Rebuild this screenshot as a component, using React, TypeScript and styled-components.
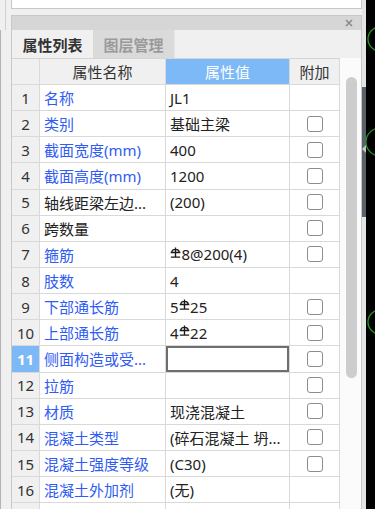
import React from "react";
import styled, { createGlobalStyle } from "styled-components";

const GlobalStyle = createGlobalStyle`
  html, body {
    margin: 0;
    padding: 0;
    background: #f0f0f0;
    overflow: hidden;
  }
  body {
    font-family: "Noto Sans", "Noto Sans CJK SC", sans-serif;
    font-size: 15px;
    color: #222;
  }
`;

const Screen = styled.div`
  display: flex;
  width: 375px;
  height: 509px;
  overflow: hidden;
`;

const Gutter = styled.div`
  width: 11px;
  display: flex;
  flex-direction: column;

  .top {
    height: 30px;
    width: 5px;
    border-right: 1px solid #d0d0d0;
  }
  .bottom {
    flex: 1;
    border-left: 1px solid #b4b4b4;
  }
`;

const Main = styled.div`
  width: 351px;
  display: flex;
  flex-direction: column;
`;

const TopBox = styled.div`
  height: 9px;
  box-sizing: border-box;
  background: #fff;
  border: 1px solid #c6c6c6;
  border-top: none;
  margin-bottom: 6px;
`;

const Panel = styled.div`
  flex: 1;
  display: flex;
  flex-direction: column;
  border-left: 1px solid #c8c8c8;
  border-right: 1px solid #c8c8c8;
  background: #f0f0f0;
  min-height: 0;
`;

const TitleBar = styled.div`
  height: 15px;
  box-sizing: border-box;
  border-top: 1px solid #c8c8c8;
  background: #d6d6d6;
  display: flex;
  align-items: center;
  justify-content: flex-end;
  padding-right: 8px;
`;

const TabRow = styled.div`
  height: 28px;
  display: flex;
  background: #f0f0f0;
`;

const Tab = styled.div<{ $active?: boolean }>`
  width: 81px;
  display: flex;
  align-items: center;
  justify-content: center;
  font-family: "Noto Sans CJK SC", sans-serif;
  font-weight: 700;
  font-size: 15px;
  color: ${(p) => (p.$active ? "#333" : "#9a9a9a")};
  background: ${(p) => (p.$active ? "#f0f0f0" : "#dadada")};
  border-right: ${(p) => (p.$active ? "none" : "1px solid #e6e6e6")};
`;

const Body = styled.div`
  flex: 1;
  display: flex;
  min-height: 0;
`;

const Table = styled.div`
  width: 328px;
  display: flex;
  flex-direction: column;
`;

const Row = styled.div<{ $header?: boolean }>`
  display: grid;
  grid-template-columns: 28px 126px 124px 50px;
  height: ${(p) => (p.$header ? "27px" : "26.15px")};
  flex-shrink: 0;
`;

const Cell = styled.div<{
  $bg?: string;
  $color?: string;
  $center?: boolean;
  $bold?: boolean;
  $focus?: boolean;
}>`
  box-sizing: border-box;
  display: flex;
  align-items: center;
  justify-content: ${(p) => (p.$center ? "center" : "flex-start")};
  padding-left: ${(p) => (p.$center ? "0" : "4px")};
  background: ${(p) => p.$bg || "#fff"};
  color: ${(p) => p.$color || "#222"};
  font-weight: ${(p) => (p.$bold ? 700 : 400)};
  border-right: 1px solid #d9d9d9;
  border-bottom: 1px solid #d9d9d9;
  white-space: nowrap;
  overflow: hidden;
  font-family: "Noto Sans", "Noto Sans CJK SC", sans-serif;
  font-size: 15px;
  box-shadow: ${(p) => (p.$focus ? "inset 0 0 0 2px #6e6e6e" : "none")};
`;

const HeaderCell = styled(Cell)`
  border-top: 1px solid #d4d4d4;
  font-family: "Noto Sans CJK SC", sans-serif;
`;

const Checkbox = styled.span`
  width: 16px;
  height: 16px;
  box-sizing: border-box;
  border: 1px solid #8c8c8c;
  border-radius: 3px;
  background: #fff;
  margin-left: 1px;
`;

const Track = styled.div`
  width: 21px;
  background: #fbfbfb;
  display: flex;
  flex-direction: column;
  padding-top: 19px;
  box-sizing: border-box;
`;

const Thumb = styled.div`
  width: 11px;
  height: 301px;
  margin-left: 6px;
  border-radius: 6px;
  background: #cdcdcd;
`;

const Strip = styled.div`
  width: 4px;
  background: #e4e4e4;
  display: flex;
  flex-direction: column;
`;

const StripHandle = styled.div`
  position: relative;
  margin-top: 87px;
  height: 130px;
  background: #5b6169;

  &::after {
    content: "";
    position: absolute;
    left: 0;
    top: 58px;
    border-top: 4px solid transparent;
    border-bottom: 4px solid transparent;
    border-right: 4px solid #c4c4c4;
  }
`;

const Canvas = styled.div`
  width: 9px;
  background: #000;
`;

const Rebar = () => (
  <svg width="11" height="11" viewBox="0 0 10 10" style={{ marginBottom: 4, marginRight: 0.5 }}>
    <path
      d="M1.6 5 C1.6 1.2 8.4 1.2 8.4 5 M0.6 5 H9.4 M5 0.4 V9.2 M0.8 9.2 H9.2"
      fill="none"
      stroke="#1a1a1a"
      strokeWidth="1.25"
    />
  </svg>
);

const renderValue = (v: string) => {
  const parts = v.split("§");
  return parts.map((p, i) => (
    <React.Fragment key={i}>
      {i > 0 && <Rebar />}
      {p}
    </React.Fragment>
  ));
};

interface RowData {
  name: string;
  value: string;
  blue: boolean;
  check: boolean;
}

const rows: RowData[] = [
  { name: "名称", value: "JL1", blue: true, check: false },
  { name: "类别", value: "基础主梁", blue: true, check: true },
  { name: "截面宽度(mm)", value: "400", blue: true, check: true },
  { name: "截面高度(mm)", value: "1200", blue: true, check: true },
  { name: "轴线距梁左边...", value: "(200)", blue: false, check: true },
  { name: "跨数量", value: "", blue: false, check: true },
  { name: "箍筋", value: "§8@200(4)", blue: true, check: true },
  { name: "肢数", value: "4", blue: true, check: false },
  { name: "下部通长筋", value: "5§25", blue: true, check: true },
  { name: "上部通长筋", value: "4§22", blue: true, check: true },
  { name: "侧面构造或受...", value: "", blue: true, check: true },
  { name: "拉筋", value: "", blue: true, check: true },
  { name: "材质", value: "现浇混凝土", blue: true, check: true },
  { name: "混凝土类型", value: "(碎石混凝土 坍...", blue: true, check: true },
  { name: "混凝土强度等级", value: "(C30)", blue: true, check: true },
  { name: "混凝土外加剂", value: "(无)", blue: true, check: false },
];

const SELECTED = 11;

export default function App() {
  return (
    <>
      <GlobalStyle />
      <Screen>
        <Gutter>
          <div className="top" />
          <div className="bottom" />
        </Gutter>
        <Main>
          <TopBox />
          <Panel>
            <TitleBar>
              <svg width="8" height="8" viewBox="0 0 8 8">
                <path d="M1 1 L7 7 M7 1 L1 7" stroke="#8a8a8a" strokeWidth="1.6" />
              </svg>
            </TitleBar>
            <TabRow>
              <Tab $active>属性列表</Tab>
              <Tab>图层管理</Tab>
            </TabRow>
            <Body>
              <Table>
                <Row $header>
                  <HeaderCell $bg="#f0f0f0" />
                  <HeaderCell $bg="#f0f0f0" $center $color="#333">
                    属性名称
                  </HeaderCell>
                  <HeaderCell $bg="#7cb9f6" $center $color="#fff">
                    属性值
                  </HeaderCell>
                  <HeaderCell $bg="#f0f0f0" $center $color="#333">
                    附加
                  </HeaderCell>
                </Row>
                {rows.map((r, i) => {
                  const n = i + 1;
                  const sel = n === SELECTED;
                  return (
                    <Row key={n}>
                      <Cell
                        $bg={sel ? "#7cb9f6" : "#f0f0f0"}
                        $color={sel ? "#fff" : "#333"}
                        $bold={sel}
                        $center
                      >
                        {n}
                      </Cell>
                      <Cell $color={r.blue ? "#2f5cf2" : "#222"}>{r.name}</Cell>
                      <Cell $focus={sel}>{renderValue(r.value)}</Cell>
                      <Cell $center>{r.check && <Checkbox />}</Cell>
                    </Row>
                  );
                })}
                <Row>
                  <Cell $bg="#f0f0f0" />
                  <Cell />
                  <Cell />
                  <Cell />
                </Row>
              </Table>
              <Track>
                <Thumb />
              </Track>
            </Body>
          </Panel>
        </Main>
        <Strip>
          <StripHandle />
        </Strip>
        <Canvas>
          <svg width="9" height="509" viewBox="0 0 9 509">
            <circle cx="14" cy="39" r="12" fill="none" stroke="#1f9a1f" strokeWidth="1.3" />
            <circle cx="14" cy="142" r="14" fill="none" stroke="#1f9a1f" strokeWidth="1.3" />
            <circle cx="14" cy="322" r="12" fill="none" stroke="#1f9a1f" strokeWidth="1.3" />
          </svg>
        </Canvas>
      </Screen>
    </>
  );
}
